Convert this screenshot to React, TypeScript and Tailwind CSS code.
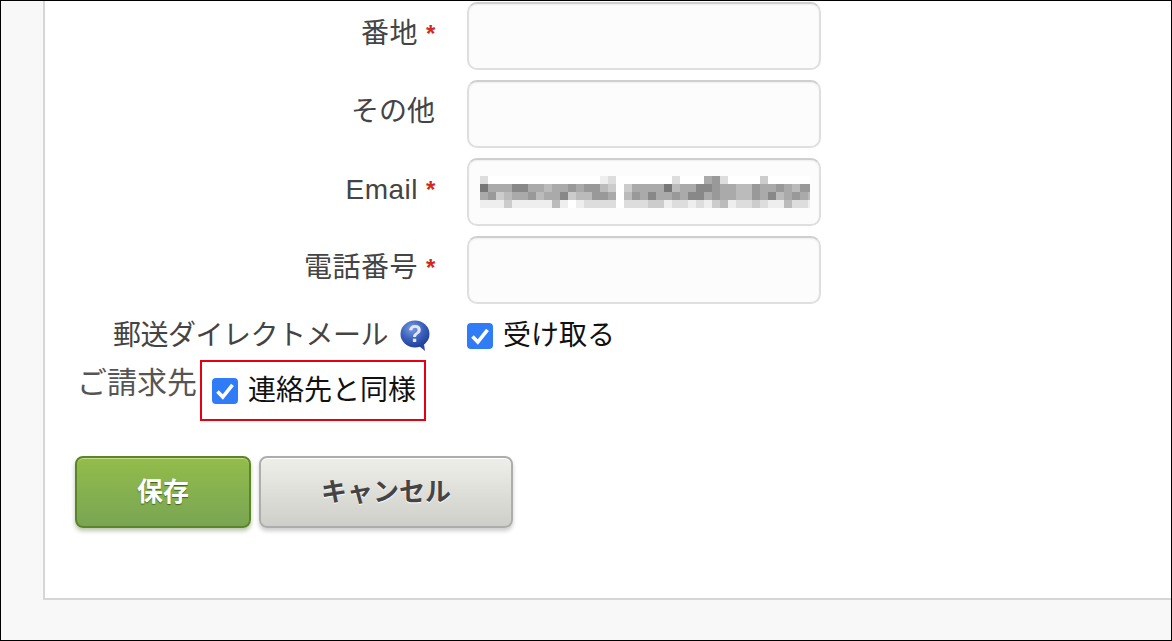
const font = "font-['Liberation_Sans','Noto_Sans_CJK_JP',sans-serif]";

// モザイク部分 (1文字 = 8pxセルの濃さ)
const mosaicRows = [
  'dffffffffffffffedfffffffdfffa9dffffcffffff',
  '7aaa88aabaa9a99bcfcaaaa7baa889aabb9aa9ab99',
  'a9cbaa9baa8cbb99afb9a8aa9a88a9aabb9a8ba9ab',
  'eeeceeeeebefeddddfdddcceddedecbeddcdeebdde',
];

function Mosaic() {
  return (
    <svg width="330" height="32" viewBox="0 0 330 32" shapeRendering="crispEdges">
      {mosaicRows.map((row, y) =>
        row.split('').map((c, x) => {
          const v = parseInt(c, 16) * 17;
          return <rect key={`${x}-${y}`} x={x * 8} y={y * 8} width="8" height="8" fill={`rgb(${v},${v},${v})`} />;
        })
      )}
    </svg>
  );
}

function Required() {
  return <span className="ml-[8px] mr-px w-[10px] text-[24px] leading-none font-bold text-[#d02a1c]">*</span>;
}

function Field({ label, required, children }: { label: string; required?: boolean; children?: React.ReactNode }) {
  return (
    <div className="flex items-center">
      <div className="flex w-[392px] items-center justify-end pb-1 text-[28px] text-[#444]">
        <span className={required ? 'tracking-[0.5px]' : 'mr-[2px]'}>{label}</span>
        {required ? <Required /> : null}
      </div>
      <div className="ml-[30px] flex h-[68px] w-[354px] items-center rounded-[10px] border-2 border-[#dfdfdf] border-t-[#cfcfcf] bg-[#fcfcfc] pl-[11px] shadow-[inset_0_1px_2px_rgba(0,0,0,0.06)]">
        {children}
      </div>
    </div>
  );
}

function Checkbox() {
  return (
    <span className="flex h-[26px] w-[26px] shrink-0 items-center justify-center rounded-[4px] bg-[#2f7cf6]">
      <svg width="26" height="26" viewBox="0 0 26 26" fill="none">
        <path d="M5.5 13.5 10.8 19 20.5 6.8" stroke="#fff" strokeWidth="3.6" />
      </svg>
    </span>
  );
}

function HelpIcon() {
  return (
    <svg width="32" height="34" viewBox="0 0 32 34" className="blur-[0.7px]">
      <defs>
        <radialGradient id="bubble" cx="40%" cy="30%" r="70%">
          <stop offset="0%" stopColor="#7f9fe0" />
          <stop offset="55%" stopColor="#3c62bd" />
          <stop offset="100%" stopColor="#21409a" />
        </radialGradient>
      </defs>
      <path d="M20 27 L26 32 L25 25Z" fill="#2b4aa5" />
      <ellipse cx="16" cy="15" rx="14.5" ry="13.5" fill="url(#bubble)" />
      <text x="16" y="23" textAnchor="middle" fontSize="23" fontWeight="700" fill="#e4e8f5" fontFamily="Liberation Sans, sans-serif">?</text>
    </svg>
  );
}

export default function App() {
  return (
    <div className={`${font} h-[641px] w-full overflow-hidden border border-black bg-[#f8f8f8] pl-[42px]`}>
      <div className="h-[599px] border-b-2 border-l-2 border-[#d6d6d6] bg-white pt-px">
        <div className="flex flex-col gap-[10px]">
          <Field label="番地" required />
          <Field label="その他" />
          <Field label="Email" required>
            <Mosaic />
          </Field>
          <Field label="電話番号" required />
        </div>

        <div className="mt-[15px] flex h-[34px] items-center">
          <div className="flex w-[392px] items-center justify-end text-[28px] text-[#444]">
            <span className="tracking-[-0.5px]">郵送ダイレクトメール</span>
            <span className="ml-[11px] mr-[6px] flex"><HelpIcon /></span>
          </div>
          <label className="ml-[30px] flex items-center gap-[10px] text-[28px] text-[#111]">
            <Checkbox />
            受け取る
          </label>
        </div>

        <div className="mt-[7px] flex items-start pl-[32px]">
          <div className="pt-[3px] text-[30px] leading-[40px] text-[#555]">ご請求先</div>
          <label className="ml-[3px] flex h-[61px] w-[226px] items-center gap-[10px] border-2 border-[#e60012] pl-[10px] text-[28px] text-[#111]">
            <Checkbox />
            連絡先と同様
          </label>
        </div>

        <div className="mt-[35px] flex gap-[8px] pl-[30px]">
          <button className="h-[72px] w-[176px] rounded-[8px] border-2 border-[#5b8527] bg-gradient-to-b from-[#93bc4a] to-[#79a553] text-[26px] font-bold text-white shadow-[inset_0_1px_0_#c3dc8f,0_3px_4px_rgba(60,90,20,0.35)] [text-shadow:0_1px_1px_#3f6218]">
            保存
          </button>
          <button className="h-[72px] w-[254px] rounded-[8px] border-2 border-[#adadad] bg-gradient-to-b from-[#efefea] to-[#cfcfc9] text-[26px] font-bold text-[#444] shadow-[inset_0_1px_0_#fff,0_3px_4px_rgba(0,0,0,0.2)] [text-shadow:0_1px_1px_#fff]">
            キャンセル
          </button>
        </div>
      </div>
    </div>
  );
}
